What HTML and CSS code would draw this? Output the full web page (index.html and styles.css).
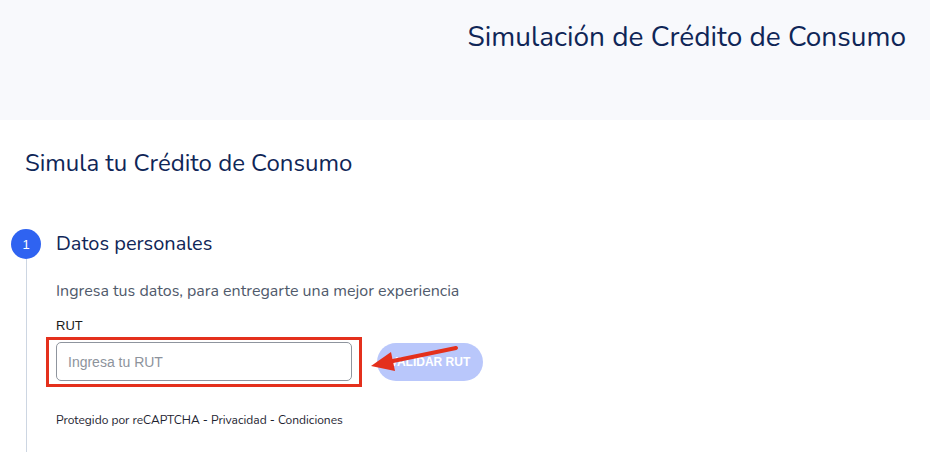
FILE: index.html
```html
<!DOCTYPE html>
<html lang="es">
<head>
<meta charset="utf-8">
<title>Simulación de Crédito de Consumo</title>
<link rel="stylesheet" href="styles.css">
</head>
<body>
<header class="top">
  <h1 class="top-title">Simulación de Crédito de Consumo</h1>
</header>
<main class="main">
  <h2 class="page-title">Simula tu Crédito de Consumo</h2>
  <section class="step">
    <div class="step-rail">
      <div class="step-num">1</div>
      <div class="step-line"></div>
    </div>
    <div class="step-body">
      <h3 class="step-title">Datos personales</h3>
      <p class="step-desc">Ingresa tus datos, para entregarte una mejor experiencia</p>
      <label class="field-label" for="rut">RUT</label>
      <div class="field-row">
        <div class="field-wrap">
          <input id="rut" class="field-input" type="text" placeholder="Ingresa tu RUT">
          <div class="annot-box"></div>
        </div>
        <button class="btn-validate" type="button">VALIDAR RUT</button>
        <svg class="annot-arrow" width="90" height="30" viewBox="0 0 90 30">
          <line x1="86" y1="5" x2="18" y2="19" stroke="#e4301c" stroke-width="4" stroke-linecap="round"/>
          <polygon points="1,23 21,9 25,28" fill="#e4301c"/>
        </svg>
      </div>
      <p class="captcha">Protegido por reCAPTCHA - Privacidad - Condiciones</p>
    </div>
  </section>
</main>
</body>
</html>
```
FILE: styles.css
```css
* { box-sizing: border-box; }
html, body { margin: 0; padding: 0; background: #ffffff; }
body { font-family: "Nunito", "Lato", "Noto Sans", sans-serif; color: #0f2657; height: 452px; overflow: hidden; }

.top {
  background: #f8f9fc;
  height: 120px;
  padding: 18px 24px 0 0;
  display: flex;
  justify-content: flex-end;
}
.top-title {
  margin: 0;
  font-weight: 400;
  font-size: 28px;
  line-height: 38px;
  color: #0f2657;
}

.main { padding: 28px 0 0 25px; }
.page-title {
  margin: 0;
  font-weight: 400;
  font-size: 24px;
  line-height: 30px;
  color: #0f2657;
}

.step {
  display: flex;
  margin: 51px 0 0 -14px;
  gap: 16px;
}
.step-rail {
  width: 30px;
  display: flex;
  flex-direction: column;
  align-items: center;
}
.step-num {
  width: 30px;
  height: 30px;
  border-radius: 50%;
  background: #2f63f1;
  color: #fff;
  font-size: 13px;
  display: flex;
  align-items: center;
  justify-content: center;
  font-family: "Liberation Sans", sans-serif;
}
.step-line {
  width: 1px;
  flex: 1;
  background: #cdd6e2;
  min-height: 200px;
}
.step-body { flex: 1; margin-left: -1px; }
.step-title {
  margin: 3px 0 0;
  font-weight: 400;
  font-size: 20px;
  line-height: 24px;
  color: #0f2657;
}
.step-desc {
  margin: 25px 0 0;
  font-size: 16px;
  line-height: 20px;
  color: #505a6b;
}
.field-label {
  display: block;
  margin-top: 17px;
  font-family: "Liberation Sans", Arial, sans-serif;
  font-size: 13px;
  line-height: 16px;
  color: #1b1b1b;
}
.field-row {
  position: relative;
  display: flex;
  align-items: center;
  gap: 25px;
  margin-top: 8px;
}
.field-wrap { position: relative; }
.field-input {
  display: block;
  width: 296px;
  height: 39px;
  border: 1px solid #8f959e;
  border-radius: 5px;
  padding: 0 11px;
  font-family: "Liberation Sans", Arial, sans-serif;
  font-size: 14px;
  color: #333;
  background: #fff;
  outline: none;
}
.field-input::placeholder { color: #8d939c; }
.annot-box {
  position: absolute;
  left: -10px;
  top: -5px;
  right: -10px;
  bottom: -6px;
  border: 3px solid #e4301c;
  pointer-events: none;
}
.btn-validate {
  width: 106px;
  height: 38px;
  border: none;
  border-radius: 19px;
  background: #b9c7fb;
  color: #ffffff;
  font-family: "Liberation Sans", Arial, sans-serif;
  font-weight: 700;
  font-size: 12px;
  padding: 0;
}
.annot-arrow {
  position: absolute;
  left: 314px;
  top: 1px;
}
.captcha {
  margin: 32px 0 0;
  font-size: 12px;
  line-height: 14px;
  color: #1d2330;
}
```
